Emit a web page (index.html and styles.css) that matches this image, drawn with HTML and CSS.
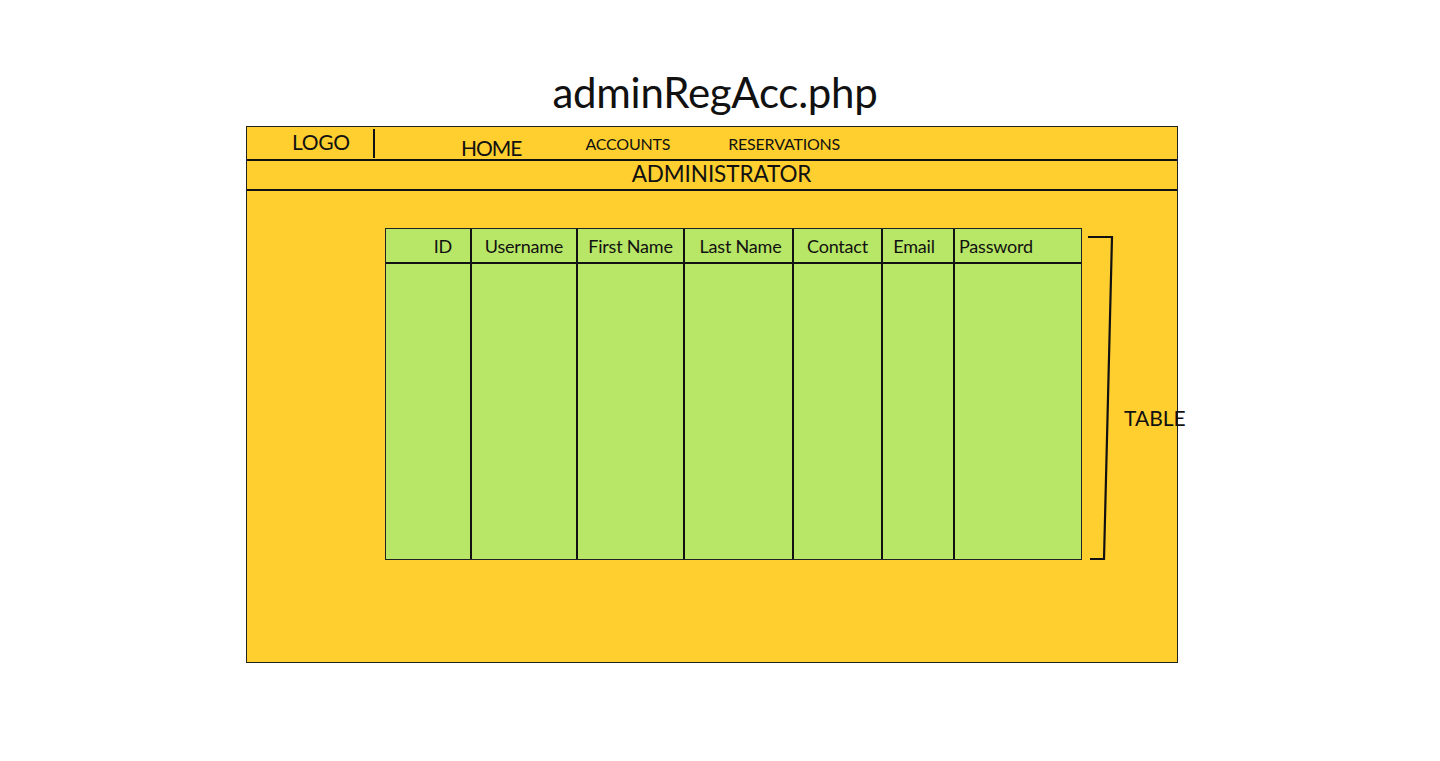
FILE: index.html
```html
<!DOCTYPE html>
<html>
<head>
<meta charset="utf-8">
<title>adminRegAcc.php</title>
<link rel="stylesheet" href="styles.css">
</head>
<body>
<div class="page">
  <div class="title">adminRegAcc.php</div>
  <div class="frame">
    <div class="nav">
      <div class="logo">LOGO</div>
      <div class="nav-home">HOME</div>
      <div class="nav-link nav-accounts">ACCOUNTS</div>
      <div class="nav-link nav-res">RESERVATIONS</div>
    </div>
    <div class="admin">ADMINISTRATOR</div>
    <div class="content">
      <div class="table">
        <div class="col c1"><div class="th th-id">ID</div><div class="td"></div></div>
        <div class="col c2"><div class="th">Username</div><div class="td"></div></div>
        <div class="col c3"><div class="th">First Name</div><div class="td"></div></div>
        <div class="col c4"><div class="th th-last">Last Name</div><div class="td"></div></div>
        <div class="col c5"><div class="th">Contact</div><div class="td"></div></div>
        <div class="col c6"><div class="th th-email">Email</div><div class="td"></div></div>
        <div class="col c7"><div class="th th-pass">Password</div><div class="td"></div></div>
      </div>
      <svg class="bracket" width="30" height="326" viewBox="0 0 30 326">
        <path d="M3 2 H27 L19 324 H5" fill="none" stroke="#111" stroke-width="2.2"/>
      </svg>
      <div class="label">TABLE</div>
    </div>
  </div>
</div>
</body>
</html>
```

FILE: styles.css
```css
* { box-sizing: border-box; }
html, body { margin: 0; padding: 0; background: #fff; }
body { font-family: Lato, "Noto Sans", sans-serif; color: #111; }

.page { width: 1440px; height: 761px; }

.title {
  height: 126px;
  padding-top: 67px;
  padding-right: 10px;
  text-align: center;
  font-size: 42px;
  line-height: 50px;
  letter-spacing: -0.25px;
}

.frame {
  margin-left: 246px;
  width: 932px;
  height: 537px;
  border: 1px solid #222;
  background: #ffcf2f;
}

.nav {
  display: flex;
  height: 34px;
  border-bottom: 2px solid #111;
}
.logo {
  width: 128px;
  margin-top: 2px;
  height: 29px;
  padding-left: 45px;
  border-right: 2px solid #111;
  font-size: 21px;
  line-height: 26px;
  letter-spacing: -0.3px;
}
.nav-home {
  margin-left: 86px;
  font-size: 21px;
  line-height: 24px;
  padding-top: 9px;
  letter-spacing: -1px;
}
.nav-link {
  font-size: 16px;
  line-height: 20px;
  padding-top: 7px;
  letter-spacing: -0.2px;
}
.nav-accounts { margin-left: 64px; }
.nav-res { margin-left: 58px; }

.admin {
  height: 30px;
  border-bottom: 2px solid #111;
  text-align: center;
  font-size: 22.5px;
  line-height: 26px;
  padding-left: 19px;
  letter-spacing: -0.1px;
}

.content {
  display: flex;
  align-items: flex-start;
  padding-top: 37px;
  padding-left: 138px;
}

.table {
  flex: none;
  display: flex;
  width: 697px;
  height: 332px;
  border: 1px solid #222;
  background: #b8e666;
}
.col { display: flex; flex-direction: column; }
.c1 { width: 84px; }
.c2 { width: 106px; border-left: 2px solid #111; }
.c3 { width: 107px; border-left: 2px solid #111; }
.c4 { width: 109px; border-left: 2px solid #111; }
.c5 { width: 89px; border-left: 2px solid #111; }
.c6 { width: 72px; border-left: 2px solid #111; }
.c7 { flex: 1; border-left: 2px solid #111; }

.th {
  height: 35px;
  border-bottom: 2px solid #111;
  text-align: center;
  font-size: 18px;
  line-height: 34px;
  letter-spacing: -0.2px;
}
.th-id { text-align: right; padding-right: 18px; }
.th-last { padding-left: 4px; }
.th-email { padding-right: 8px; }
.th-pass { text-align: left; padding-left: 4px; }
.td { flex: 1; }

.bracket { margin-left: 3px; margin-top: 7px; flex: none; }
.label {
  flex: none;
  margin-left: 9px;
  margin-top: 177px;
  font-size: 21px;
  line-height: 26px;
  white-space: nowrap;
}
```
